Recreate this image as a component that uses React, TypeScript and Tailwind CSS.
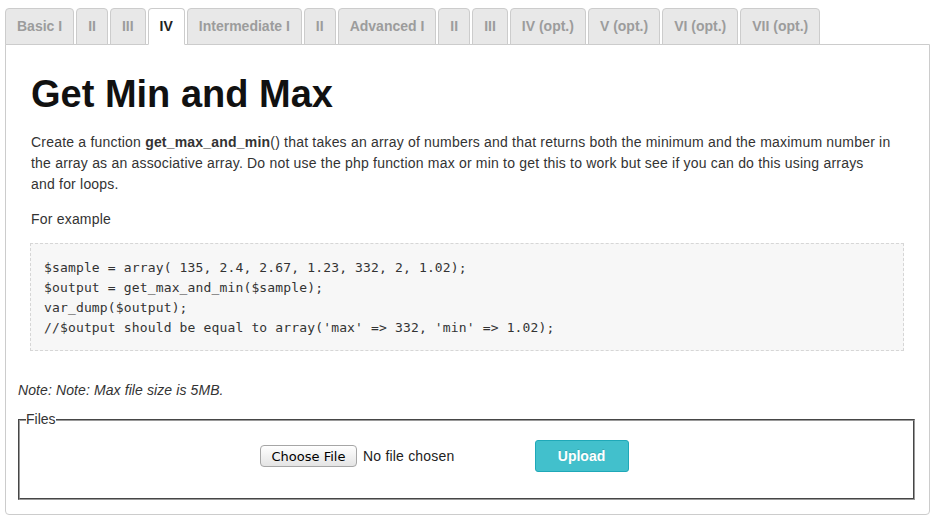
import React from "react";

const tabs = [
  "Basic I",
  "II",
  "III",
  "IV",
  "Intermediate I",
  "II",
  "Advanced I",
  "II",
  "III",
  "IV (opt.)",
  "V (opt.)",
  "VI (opt.)",
  "VII (opt.)",
];

const codeLines = [
  "$sample = array( 135, 2.4, 2.67, 1.23, 332, 2, 1.02);",
  "$output = get_max_and_min($sample);",
  "var_dump($output);",
  "//$output should be equal to array('max' => 332, 'min' => 1.02);",
];

export default function App() {
  return (
    <div
      className="min-h-[527px] w-[944px] bg-white text-[14px] leading-[21px] text-[#333]"
      style={{ fontFamily: '"Liberation Sans", Arial, Helvetica, sans-serif' }}
    >
      <div className="flex gap-[2px] pl-[5px] pt-[8px]">
        {tabs.map((t, i) => {
          const active = i === 3;
          return (
            <div
              key={i}
              className={
                active
                  ? "relative z-10 -mb-px flex h-[37px] items-center rounded-t-[4px] border border-[#cccccc] border-b-white bg-white px-[11px] font-bold text-[#222]"
                  : "relative -mb-px flex h-[37px] items-center rounded-t-[4px] border border-[#cccccc] bg-[#e8e8e8] px-[11px] font-bold text-[#9c9c9c]"
              }
            >
              {t}
            </div>
          );
        })}
      </div>
      <div className="ml-[5px] w-[925px] rounded-b-[4px] border border-[#cccccc] px-[12px] pb-[14px]">
        <div className="px-[13px] pt-[28px]">
          <h1 className="text-[38px] font-bold leading-[42px] text-[#111]">Get Min and Max</h1>
          <p className="mt-[17px] tracking-[0.2px]">
            Create a function <b>get_max_and_min</b>() that takes an array of numbers and that returns
            both the minimum and the maximum number in
            <br />
            the array as an associative array. Do not use the php function max or min to get this to
            work but see if you can do this using arrays
            <br />
            and for loops.
          </p>
          <p className="mt-[14px] tracking-[0.2px]">For example</p>
          <div
            className="-ml-px mt-[13px] border border-dashed border-[#d6d6d6] bg-[#f7f7f7] px-[13px] pb-[12px] pt-[14px] text-[13px] leading-[20px] tracking-[0.15px] text-[#333]"
            style={{ fontFamily: '"DejaVu Sans Mono", Menlo, monospace' }}
          >
            {codeLines.map((l, i) => (
              <div key={i} className="whitespace-pre">
                {l}
              </div>
            ))}
          </div>
        </div>
        <p className="mt-[29px] italic tracking-[0.1px]">Note: Note: Max file size is 5MB.</p>
        <fieldset className="mt-[8px] w-[897px] border-2 border-[#9a9a9a] px-[6px] pb-[26px] pt-[10px] [border-style:groove]">
          <legend className="p-0 leading-[21px]">Files</legend>
          <div className="flex items-center pl-[234px]">
            <span
              className="flex h-[22px] w-[97px] items-center justify-center rounded-[4px] border border-[#a6a6a6] bg-gradient-to-b from-white to-[#e4e4e4] text-[13px] text-black"
              style={{ fontFamily: '"DejaVu Sans", "Lucida Grande", sans-serif' }}
            >
              Choose File
            </span>
            <span className="ml-[6px] tracking-[0.2px] text-[#222]">No file chosen</span>
            <button className="ml-[80px] h-[32px] w-[94px] rounded-[3px] border border-[#1fa8b8] bg-[#42c0cc] font-bold text-white [text-shadow:0_-1px_0_rgba(0,0,0,0.15)]">
              Upload
            </button>
          </div>
        </fieldset>
      </div>
    </div>
  );
}
